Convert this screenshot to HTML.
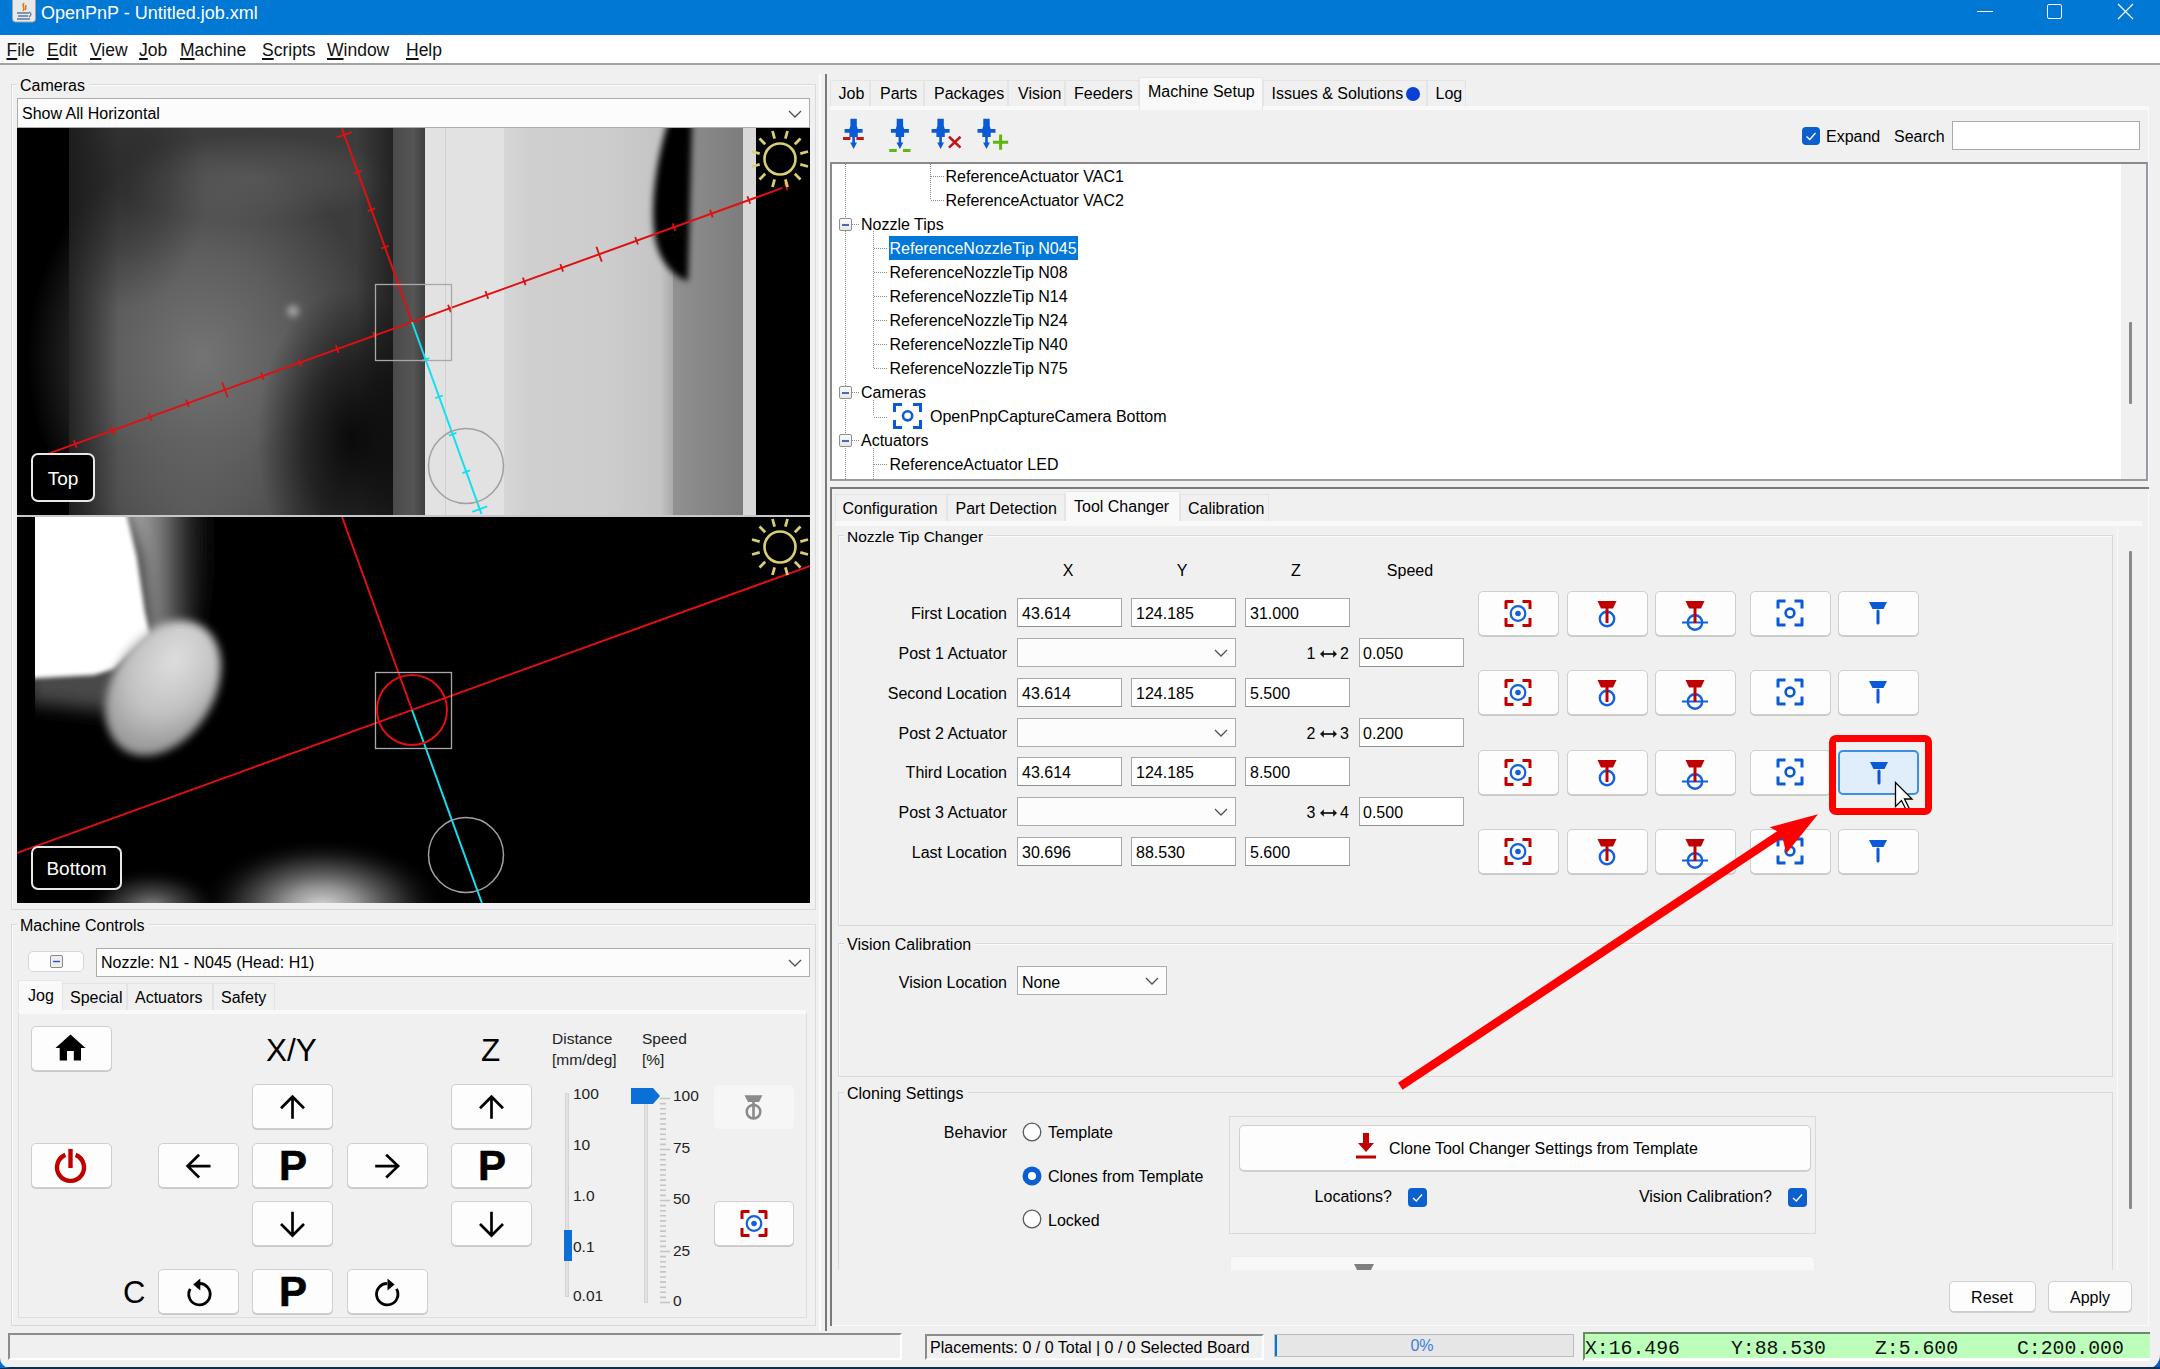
<!DOCTYPE html>
<html><head><meta charset="utf-8">
<style>
*{box-sizing:border-box}
html,body{margin:0;padding:0}
body{width:2160px;height:1369px;overflow:hidden;position:relative;background:#f0f0f0;font-family:"Liberation Sans",sans-serif;font-size:16px;color:#000}
.a{position:absolute}
.t{position:absolute;white-space:nowrap;line-height:24px;height:24px}
</style></head>
<body>
<div class="a" style="left:0px;top:0px;width:2160px;height:35px;background:#0078d4"></div>
<svg class="a" style="left:12px;top:0px;" width="24" height="23" viewBox="0 0 24 23"><rect x="0.5" y="-2" width="23" height="24" rx="3" fill="#e8e8e8" stroke="#9aa4ad"/><path d="M12 3 C9 6 14 8 11 11 M14 5 C13 7 15 8 13 10" stroke="#e07820" stroke-width="1.6" fill="none"/><path d="M5 13 H17 M6 16 H16 M5 19 H18" stroke="#5a7a9a" stroke-width="1.4"/><path d="M17 12 Q21 14 17 17" stroke="#5a7a9a" stroke-width="1.3" fill="none"/></svg>
<div class="t" style="top:1px;font-size:18px;color:#fff;left:41px;">OpenPnP - Untitled.job.xml</div>
<div class="a" style="left:1977px;top:11px;width:16px;height:1px;background:#fff"></div>
<div class="a" style="left:2047px;top:4px;width:15px;height:15px;border:1px solid #fff;border-radius:2px"></div>
<svg class="a" style="left:2117px;top:3px;" width="17" height="17" viewBox="0 0 17 17"><path d="M1 1 L16 16 M16 1 L1 16" stroke="#fff" stroke-width="1.2"/></svg>
<div class="a" style="left:0px;top:35px;width:2160px;height:28px;background:#fff"></div>
<div class="a" style="left:0px;top:36px;width:40px;height:26px;background:#f7f7f7"></div>
<div class="a" style="left:0px;top:63px;width:2160px;height:2px;background:#a3a3a3"></div>
<div class="t" style="top:38px;font-size:17.5px;color:#111;left:6.5px;"><span style="text-decoration:underline;text-underline-offset:2px;text-decoration-thickness:2px">F</span>ile</div>
<div class="t" style="top:38px;font-size:17.5px;color:#111;left:47px;"><span style="text-decoration:underline;text-underline-offset:2px;text-decoration-thickness:2px">E</span>dit</div>
<div class="t" style="top:38px;font-size:17.5px;color:#111;left:90px;"><span style="text-decoration:underline;text-underline-offset:2px;text-decoration-thickness:2px">V</span>iew</div>
<div class="t" style="top:38px;font-size:17.5px;color:#111;left:139px;"><span style="text-decoration:underline;text-underline-offset:2px;text-decoration-thickness:2px">J</span>ob</div>
<div class="t" style="top:38px;font-size:17.5px;color:#111;left:180px;"><span style="text-decoration:underline;text-underline-offset:2px;text-decoration-thickness:2px">M</span>achine</div>
<div class="t" style="top:38px;font-size:17.5px;color:#111;left:262px;"><span style="text-decoration:underline;text-underline-offset:2px;text-decoration-thickness:2px">S</span>cripts</div>
<div class="t" style="top:38px;font-size:17.5px;color:#111;left:327px;"><span style="text-decoration:underline;text-underline-offset:2px;text-decoration-thickness:2px">W</span>indow</div>
<div class="t" style="top:38px;font-size:17.5px;color:#111;left:406px;"><span style="text-decoration:underline;text-underline-offset:2px;text-decoration-thickness:2px">H</span>elp</div>
<div class="a" style="left:11px;top:84px;width:805px;height:826px;border:1px solid #d9d9d9;box-shadow:inset 1px 1px 0 #fbfbfb"></div>
<div class="t" style="left:17px;top:74px;font-size:16px;background:linear-gradient(transparent 7px,#f0f0f0 7px);padding:0 4px 0 3px">Cameras</div>
<div class="a" style="left:17px;top:98px;width:793px;height:30px;background:#fcfcfc;border:1px solid #adadad"></div>
<div class="t" style="top:102px;font-size:16px;left:22px;">Show All Horizontal</div>
<svg class="a" style="left:788px;top:110px;" width="14" height="8" viewBox="0 0 14 8"><polyline points="1,1 7.0,7 13,1" fill="none" stroke="#505050" stroke-width="1.3"/></svg>
<svg class="a" style="left:17px;top:128px;" width="793" height="387" viewBox="0 0 793 387"><defs>
<filter id="b3" x="-50%" y="-50%" width="200%" height="200%"><feGaussianBlur stdDeviation="3"/></filter>
<linearGradient id="g1" x1="52" x2="378" y1="0" y2="0" gradientUnits="userSpaceOnUse">
<stop offset="0" stop-color="#202020"/><stop offset="0.06" stop-color="#3a3a3a"/><stop offset="0.2" stop-color="#5c5c5c"/>
<stop offset="0.45" stop-color="#636363"/><stop offset="0.65" stop-color="#515151"/><stop offset="0.82" stop-color="#333333"/><stop offset="1" stop-color="#222222"/>
</linearGradient>
<linearGradient id="g2" x1="0" x2="1"><stop offset="0" stop-color="#d6d6d6"/><stop offset="0.15" stop-color="#cfcfcf"/><stop offset="0.6" stop-color="#cdcdcd"/><stop offset="0.92" stop-color="#c4c4c4"/><stop offset="1" stop-color="#a8a8a8"/></linearGradient>
<linearGradient id="g3" x1="0" x2="1"><stop offset="0" stop-color="#909090"/><stop offset="1" stop-color="#7c7c7c"/></linearGradient>
<linearGradient id="gl" x1="0" x2="1"><stop offset="0" stop-color="#000" stop-opacity="0.5"/><stop offset="1" stop-color="#000" stop-opacity="0"/></linearGradient>
<linearGradient id="gr" x1="0" x2="1"><stop offset="0" stop-color="#000" stop-opacity="0"/><stop offset="1" stop-color="#000" stop-opacity="0.45"/></linearGradient>
<linearGradient id="g5" x1="0" x2="1"><stop offset="0" stop-color="#4a4a4a"/><stop offset="0.6" stop-color="#555"/><stop offset="1" stop-color="#3a3a3a"/></linearGradient>
<radialGradient id="r1"><stop offset="0" stop-color="#6a6a6a" stop-opacity="0.5"/><stop offset="0.5" stop-color="#6a6a6a" stop-opacity="0.3"/><stop offset="1" stop-color="#6a6a6a" stop-opacity="0"/></radialGradient><radialGradient id="r2"><stop offset="0" stop-color="#7a7a7a" stop-opacity="0.9"/><stop offset="0.5" stop-color="#7a7a7a" stop-opacity="0.54"/><stop offset="1" stop-color="#7a7a7a" stop-opacity="0"/></radialGradient><radialGradient id="r3"><stop offset="0" stop-color="#000" stop-opacity="0.85"/><stop offset="0.5" stop-color="#000" stop-opacity="0.51"/><stop offset="1" stop-color="#000" stop-opacity="0"/></radialGradient><radialGradient id="r4"><stop offset="0" stop-color="#686868" stop-opacity="0.5"/><stop offset="0.5" stop-color="#686868" stop-opacity="0.3"/><stop offset="1" stop-color="#686868" stop-opacity="0"/></radialGradient><radialGradient id="r5"><stop offset="0" stop-color="#555555" stop-opacity="0.7"/><stop offset="0.5" stop-color="#555555" stop-opacity="0.42"/><stop offset="1" stop-color="#555555" stop-opacity="0"/></radialGradient>
</defs>
<rect width="793" height="387" fill="#000"/>
<rect x="52" y="0" width="326" height="387" fill="#3c3c3c"/>
<ellipse cx="185" cy="230" rx="175" ry="210" fill="url(#r2)"/>
<ellipse cx="235" cy="50" rx="140" ry="45" fill="url(#r1)"/>
<ellipse cx="175" cy="380" rx="130" ry="70" fill="url(#r4)"/>
<ellipse cx="335" cy="310" rx="95" ry="150" fill="url(#r3)"/>
<ellipse cx="110" cy="60" rx="80" ry="120" fill="url(#r3)" opacity="0.35"/>
<rect x="52" y="0" width="50" height="387" fill="url(#gl)"/>
<rect x="340" y="0" width="38" height="387" fill="url(#gr)"/>
<circle cx="276" cy="183" r="6" fill="#a0a0a0" filter="url(#b3)"/>
<rect x="376" y="0" width="34" height="387" fill="url(#g5)"/>
<rect x="408" y="0" width="79" height="387" fill="#e2e2e2"/>

<rect x="428" y="0" width="1" height="387" fill="#d0d0d0"/>
<rect x="487" y="0" width="170" height="387" fill="url(#g2)"/>
<rect x="656" y="0" width="71" height="387" fill="url(#g3)"/>
<g filter="url(#b3)"><path d="M651 -5 C638 35 632 85 639 115 C645 138 660 150 671 153 L675 -5 Z" fill="#000"/></g>
<rect x="726" y="0" width="13" height="387" fill="#d8d8d8"/>
<rect x="739" y="0" width="54" height="387" fill="#000"/>
<path d="M30.2 326.1 L765.5 59.9" stroke="#e01010" stroke-width="2" fill="none"/><path d="M324.8 0.0 L395.0 194.0" stroke="#e01010" stroke-width="2" fill="none"/><path d="M395.0 194.0 L464.5 386.0" stroke="#10e0f0" stroke-width="2" fill="none"/><path d="M431.1 176.7 L433.8 184.2 M468.5 163.1 L471.2 170.7 M505.9 149.6 L508.6 157.1 M543.3 136.0 L546.1 143.6 M579.4 118.7 L584.8 133.8 M618.2 109.0 L620.9 116.5 M655.6 95.4 L658.3 102.9 M693.0 81.9 L695.7 89.4 M730.4 68.3 L733.2 75.8 M767.9 54.8 L770.6 62.3 M358.9 211.3 L356.2 203.8 M321.5 224.9 L318.8 217.3 M284.1 238.4 L281.4 230.9 M246.7 252.0 L243.9 244.4 M210.6 269.3 L205.2 254.2 M171.8 279.0 L169.1 271.5 M134.4 292.6 L131.7 285.1 M97.0 306.1 L94.3 298.6 M59.6 319.7 L56.8 312.2 M377.7 157.9 L385.2 155.2 M364.1 120.5 L371.7 117.8 M350.6 83.1 L358.1 80.4 M337.0 45.7 L344.6 42.9 M319.7 9.6 L334.8 4.2 " stroke="#e01010" stroke-width="1.8" fill="none"/><path d="M412.3 230.1 L404.8 232.8 M425.9 267.5 L418.3 270.2 M439.4 304.9 L431.9 307.6 M453.0 342.3 L445.4 345.1 M470.3 378.4 L455.2 383.8 " stroke="#10e0f0" stroke-width="1.8" fill="none"/><rect x="358.5" y="156.5" width="76" height="76" fill="none" stroke="#a8a8a8" stroke-width="1.3"/><circle cx="449" cy="338" r="37.5" fill="none" stroke="#a0a0a0" stroke-width="1.5"/><circle cx="763" cy="31" r="15.5" fill="none" stroke="#d8d070" stroke-width="2.6"/><path d="M783.3 36.4 L791.0 38.5 M777.8 45.8 L783.5 51.5 M768.4 51.3 L770.5 59.0 M757.6 51.3 L755.5 59.0 M748.2 45.8 L742.5 51.5 M742.7 36.4 L735.0 38.5 M742.7 25.6 L735.0 23.5 M748.2 16.2 L742.5 10.5 M757.6 10.7 L755.5 3.0 M768.4 10.7 L770.5 3.0 M777.8 16.2 L783.5 10.5 M783.3 25.6 L791.0 23.5 " stroke="#d8d070" stroke-width="2.8" fill="none"/><rect x="15" y="326" width="62" height="47" rx="6" fill="#000" stroke="#e8e8e8" stroke-width="2"/><text x="46.0" y="356.5" fill="#fff" font-family="Liberation Sans" font-size="19" text-anchor="middle">Top</text></svg>
<div class="a" style="left:17px;top:515px;width:793px;height:2px;background:#c8c8c8"></div>
<svg class="a" style="left:17px;top:517px;" width="793" height="386" viewBox="0 0 793 386"><defs>
<filter id="c2" x="-50%" y="-50%" width="200%" height="200%"><feGaussianBlur stdDeviation="2"/></filter>
<filter id="c4" x="-50%" y="-50%" width="200%" height="200%"><feGaussianBlur stdDeviation="4"/></filter>
<filter id="c8" x="-50%" y="-50%" width="200%" height="200%"><feGaussianBlur stdDeviation="9"/></filter>
<radialGradient id="rg1" cx="0.45" cy="0.3" r="0.65"><stop offset="0" stop-color="#dedede"/><stop offset="0.6" stop-color="#c2c2c2"/><stop offset="1" stop-color="#9a9a9a"/></radialGradient>
<radialGradient id="rg2" cx="0.5" cy="0.5" r="0.5"><stop offset="0" stop-color="#d8d8d8"/><stop offset="0.3" stop-color="#909090"/><stop offset="0.65" stop-color="#3a3a3a" stop-opacity="0.8"/><stop offset="1" stop-color="#000" stop-opacity="0"/></radialGradient>
<radialGradient id="rg3" cx="0.5" cy="0.5" r="0.5"><stop offset="0" stop-color="#8a8a8a"/><stop offset="0.6" stop-color="#303030" stop-opacity="0.7"/><stop offset="1" stop-color="#000" stop-opacity="0"/></radialGradient>
<linearGradient id="lg1" x1="0" x2="1"><stop offset="0" stop-color="#c0c0c0"/><stop offset="0.45" stop-color="#707070"/><stop offset="1" stop-color="#000" stop-opacity="0"/></linearGradient>
</defs>
<rect width="793" height="386" fill="#000"/>
<g filter="url(#c8)"><path d="M100 -20 L205 -20 L195 50 L180 110 L130 130 L120 40 Z" fill="url(#lg1)"/></g>
<g filter="url(#c8)"><path d="M10 140 L110 130 L100 195 L10 185 Z" fill="#4a4a4a"/></g>
<g filter="url(#c2)"><path d="M-10 -10 L108 -10 L120 40 L128 95 L133 118 L97 152 L77 158 L40 160 L-10 163 Z" fill="#fff"/></g>
<rect x="18" y="0" width="80" height="140" fill="#fff"/>
<g filter="url(#c4)"><ellipse cx="146" cy="171" rx="51" ry="73" transform="rotate(32 146 171)" fill="url(#rg1)"/></g>
<ellipse cx="305" cy="390" rx="125" ry="70" fill="url(#rg2)"/>
<ellipse cx="135" cy="390" rx="70" ry="40" fill="url(#rg3)"/>
<rect x="0" y="0" width="18" height="386" fill="#000"/>
<path d="M-0.4 336.1 L793.7 48.7" stroke="#e01010" stroke-width="2" fill="none"/><path d="M325.1 0.0 L395.0 193.0" stroke="#e01010" stroke-width="2" fill="none"/><path d="M395.0 193.0 L464.9 386.0" stroke="#10e0f0" stroke-width="2" fill="none"/><rect x="358.5" y="155.5" width="76" height="76" fill="none" stroke="#a8a8a8" stroke-width="1.3"/><circle cx="395" cy="193" r="35" fill="none" stroke="#e01010" stroke-width="2"/><circle cx="449" cy="338" r="37.5" fill="none" stroke="#a0a0a0" stroke-width="1.5"/><circle cx="763" cy="30" r="15.5" fill="none" stroke="#d8d070" stroke-width="2.6"/><path d="M783.3 35.4 L791.0 37.5 M777.8 44.8 L783.5 50.5 M768.4 50.3 L770.5 58.0 M757.6 50.3 L755.5 58.0 M748.2 44.8 L742.5 50.5 M742.7 35.4 L735.0 37.5 M742.7 24.6 L735.0 22.5 M748.2 15.2 L742.5 9.5 M757.6 9.7 L755.5 2.0 M768.4 9.7 L770.5 2.0 M777.8 15.2 L783.5 9.5 M783.3 24.6 L791.0 22.5 " stroke="#d8d070" stroke-width="2.8" fill="none"/><rect x="15" y="330" width="89" height="42" rx="6" fill="#000" stroke="#e8e8e8" stroke-width="2"/><text x="59.5" y="358.0" fill="#fff" font-family="Liberation Sans" font-size="19" text-anchor="middle">Bottom</text></svg>
<div class="a" style="left:11px;top:924px;width:805px;height:402px;border:1px solid #d9d9d9;box-shadow:inset 1px 1px 0 #fbfbfb"></div>
<div class="t" style="left:17px;top:914px;font-size:16px;background:linear-gradient(transparent 7px,#f0f0f0 7px);padding:0 4px 0 3px">Machine Controls</div>
<div class="a" style="left:28px;top:951px;width:56px;height:21px;background:#fdfdfd;border:1px solid #d6d6d6;border-radius:5px;box-shadow:0 1px 0 #c8c8c8;box-shadow:none"><svg width="54" height="19" style="position:absolute;left:0;top:0"><rect x="21.5" y="3.5" width="12" height="12" rx="1.5" fill="#eee" stroke="#8a8a8a"/><path d="M24 9.5 H31" stroke="#3050b0" stroke-width="1.4"/></svg></div>
<div class="a" style="left:96px;top:948px;width:714px;height:29px;background:#fcfcfc;border:1px solid #adadad"></div>
<div class="t" style="top:951px;font-size:16px;left:101px;">Nozzle: N1 - N045 (Head: H1)</div>
<svg class="a" style="left:788px;top:959px;" width="14" height="8" viewBox="0 0 14 8"><polyline points="1,1 7.0,7 13,1" fill="none" stroke="#505050" stroke-width="1.3"/></svg>
<div class="a" style="left:18px;top:983px;width:44px;height:27px;background:#f0f0f0;border:1px solid #e3e3e3"></div>
<div class="a" style="left:18px;top:980px;width:45px;height:32px;background:#f9f9f9;border:1px solid #e6e6e6;border-bottom:none"></div>
<div class="a" style="left:62px;top:983px;width:65px;height:27px;background:#f0f0f0;border:1px solid #e3e3e3;border-bottom:none"></div>
<div class="t" style="top:986px;font-size:16px;left:70px;">Special</div>
<div class="a" style="left:127px;top:983px;width:86px;height:27px;background:#f0f0f0;border:1px solid #e3e3e3;border-bottom:none"></div>
<div class="t" style="top:986px;font-size:16px;left:135px;">Actuators</div>
<div class="a" style="left:213px;top:983px;width:62px;height:27px;background:#f0f0f0;border:1px solid #e3e3e3;border-bottom:none"></div>
<div class="t" style="top:986px;font-size:16px;left:221px;">Safety</div>
<div class="t" style="top:984px;font-size:16px;left:28px;">Jog</div>
<div class="a" style="left:18px;top:1010px;width:789px;height:308px;background:#f0f0f0;border:1px solid #dedede;border-top:4px solid #f9f9f9"></div>
<div class="a" style="left:31px;top:1026px;width:81px;height:45px;background:#fdfdfd;border:1px solid #cfcfcf;border-radius:5px;box-shadow:0 1px 0 #c8c8c8;"><svg width="81" height="45" style="position:absolute;left:-1px;top:-1px"><path d="M39.5 8.5 L24.5 22 H28.7 V34.5 H36 V25 H42.8 V34.5 H50 V22 H54.5 Z" fill="#000"/></svg></div>
<div class="a" style="left:31px;top:1143px;width:81px;height:45px;background:#fdfdfd;border:1px solid #cfcfcf;border-radius:5px;box-shadow:0 1px 0 #c8c8c8;"><svg width="81" height="45" style="position:absolute;left:-1px;top:-1px"><path d="M34.4 11.9 A13.5 13.5 0 1 0 44.6 11.9" stroke="#c00000" stroke-width="4.4" fill="none"/><path d="M39.5 5.9 V25" stroke="#c00000" stroke-width="4.4"/></svg></div>
<div class="a" style="left:252px;top:1084px;width:81px;height:45px;background:#fdfdfd;border:1px solid #cfcfcf;border-radius:5px;box-shadow:0 1px 0 #c8c8c8;"><svg width="81" height="45" style="position:absolute;left:-1px;top:-1px"><path d="M40.5 34.7 V12.5 M29 24.2 L40.5 12.7 L52 24.2" stroke="#000" stroke-width="2.7" fill="none" stroke-linecap="butt" stroke-linejoin="miter"/></svg></div>
<div class="a" style="left:158px;top:1143px;width:81px;height:45px;background:#fdfdfd;border:1px solid #cfcfcf;border-radius:5px;box-shadow:0 1px 0 #c8c8c8;"><svg width="81" height="45" style="position:absolute;left:-1px;top:-1px"><path d="M52.5 23.1 H29.6 M41.1 11.7 L29.6 23.1 L41.1 34.5" stroke="#000" stroke-width="2.7" fill="none" stroke-linecap="butt" stroke-linejoin="miter"/></svg></div>
<div class="a" style="left:252px;top:1143px;width:81px;height:45px;background:#fdfdfd;border:1px solid #cfcfcf;border-radius:5px;box-shadow:0 1px 0 #c8c8c8;"><div style="position:absolute;left:0;top:-1px;width:80px;text-align:center;font-weight:bold;font-size:42px;line-height:45px;-webkit-text-stroke:0.6px #000">P</div></div>
<div class="a" style="left:347px;top:1143px;width:81px;height:45px;background:#fdfdfd;border:1px solid #cfcfcf;border-radius:5px;box-shadow:0 1px 0 #c8c8c8;"><svg width="81" height="45" style="position:absolute;left:-1px;top:-1px"><path d="M28.2 23.1 H51.1 M39.2 11.7 L51.1 23.1 L39.2 34.5" stroke="#000" stroke-width="2.7" fill="none" stroke-linecap="butt" stroke-linejoin="miter"/></svg></div>
<div class="a" style="left:252px;top:1201px;width:81px;height:45px;background:#fdfdfd;border:1px solid #cfcfcf;border-radius:5px;box-shadow:0 1px 0 #c8c8c8;"><svg width="81" height="45" style="position:absolute;left:-1px;top:-1px"><path d="M40.5 10.7 V34.5 M29 23 L40.5 34.5 L52 23" stroke="#000" stroke-width="2.7" fill="none" stroke-linecap="butt" stroke-linejoin="miter"/></svg></div>
<div class="a" style="left:158px;top:1269px;width:81px;height:45px;background:#fdfdfd;border:1px solid #cfcfcf;border-radius:5px;box-shadow:0 1px 0 #c8c8c8;"><svg width="81" height="45" style="position:absolute;left:-1px;top:-1px"><path d="M41.5 14.5 A10.7 10.7 0 1 1 32.2 19.85" stroke="#000" stroke-width="2.8" fill="none"/><path d="M35.2 15.5 L42.3 9.4 V21.6 Z" fill="#000"/></svg></div>
<div class="a" style="left:252px;top:1269px;width:81px;height:45px;background:#fdfdfd;border:1px solid #cfcfcf;border-radius:5px;box-shadow:0 1px 0 #c8c8c8;"><div style="position:absolute;left:0;top:-1px;width:80px;text-align:center;font-weight:bold;font-size:42px;line-height:45px;-webkit-text-stroke:0.6px #000">P</div></div>
<div class="a" style="left:347px;top:1269px;width:81px;height:45px;background:#fdfdfd;border:1px solid #cfcfcf;border-radius:5px;box-shadow:0 1px 0 #c8c8c8;"><svg width="81" height="45" style="position:absolute;left:-1px;top:-1px"><path d="M40.2 14.5 A10.7 10.7 0 1 0 49.5 19.85" stroke="#000" stroke-width="2.8" fill="none"/><path d="M47.6 15.5 L40.5 9.4 V21.6 Z" fill="#000"/></svg></div>
<div class="a" style="left:451px;top:1084px;width:81px;height:45px;background:#fdfdfd;border:1px solid #cfcfcf;border-radius:5px;box-shadow:0 1px 0 #c8c8c8;"><svg width="81" height="45" style="position:absolute;left:-1px;top:-1px"><path d="M40.5 34.7 V12.5 M29 24.2 L40.5 12.7 L52 24.2" stroke="#000" stroke-width="2.7" fill="none" stroke-linecap="butt" stroke-linejoin="miter"/></svg></div>
<div class="a" style="left:451px;top:1143px;width:81px;height:45px;background:#fdfdfd;border:1px solid #cfcfcf;border-radius:5px;box-shadow:0 1px 0 #c8c8c8;"><div style="position:absolute;left:0;top:-1px;width:80px;text-align:center;font-weight:bold;font-size:42px;line-height:45px;-webkit-text-stroke:0.6px #000">P</div></div>
<div class="a" style="left:451px;top:1201px;width:81px;height:45px;background:#fdfdfd;border:1px solid #cfcfcf;border-radius:5px;box-shadow:0 1px 0 #c8c8c8;"><svg width="81" height="45" style="position:absolute;left:-1px;top:-1px"><path d="M40.5 10.7 V34.5 M29 23 L40.5 34.5 L52 23" stroke="#000" stroke-width="2.7" fill="none" stroke-linecap="butt" stroke-linejoin="miter"/></svg></div>
<div class="t" style="top:1038px;font-size:31.5px;left:266px;">X/Y</div>
<div class="t" style="top:1038px;font-size:31.5px;left:481px;">Z</div>
<div class="t" style="top:1281px;font-size:31px;left:123px;">C</div>
<div class="t" style="top:1027px;font-size:15.5px;color:#222;left:552px;">Distance</div>
<div class="t" style="top:1048px;font-size:15.5px;color:#222;left:552px;">[mm/deg]</div>
<div class="t" style="top:1027px;font-size:15.5px;color:#222;left:642px;">Speed</div>
<div class="t" style="top:1048px;font-size:15.5px;color:#222;left:642px;">[%]</div>
<div class="a" style="left:565px;top:1093px;width:4px;height:204px;background:#e2e2e2;border:1px solid #d4d4d4"></div>
<div class="a" style="left:564px;top:1230px;width:8px;height:31px;background:#0a6fd6"></div>
<div class="t" style="top:1082px;font-size:15.5px;color:#222;left:573px;">100</div>
<div class="t" style="top:1133px;font-size:15.5px;color:#222;left:573px;">10</div>
<div class="t" style="top:1184px;font-size:15.5px;color:#222;left:573px;">1.0</div>
<div class="t" style="top:1235px;font-size:15.5px;color:#222;left:573px;">0.1</div>
<div class="t" style="top:1284px;font-size:15.5px;color:#222;left:573px;">0.01</div>
<div class="a" style="left:644px;top:1097px;width:4px;height:206px;background:#e2e2e2;border:1px solid #d4d4d4"></div>
<svg class="a" style="left:631px;top:1088px;" width="30" height="17" viewBox="0 0 30 17"><path d="M0 0 H22 L29 8 L22 16 H0 Z" fill="#0a6fd6"/></svg>
<svg class="a" style="left:0px;top:0px;" width="0" height="0" viewBox="0 0 0 0"></svg>
<svg class="a" style="left:660px;top:1097px;" width="12" height="208" viewBox="0 0 12 208"><path d="M0 1.5 H6 M0 6.6 H6 M0 11.7 H6 M0 16.8 H6 M0 21.9 H6 M0 27.0 H6 M0 32.1 H6 M0 37.2 H6 M0 42.3 H6 M0 47.4 H6 M0 52.5 H6 M0 57.6 H6 M0 62.7 H6 M0 67.8 H6 M0 72.9 H6 M0 78.0 H6 M0 83.1 H6 M0 88.2 H6 M0 93.3 H6 M0 98.4 H6 M0 103.5 H6 M0 108.6 H6 M0 113.7 H6 M0 118.8 H6 M0 123.9 H6 M0 129.0 H6 M0 134.1 H6 M0 139.2 H6 M0 144.3 H6 M0 149.4 H6 M0 154.5 H6 M0 159.6 H6 M0 164.7 H6 M0 169.8 H6 M0 174.9 H6 M0 180.0 H6 M0 185.1 H6 M0 190.2 H6 M0 195.3 H6 M0 200.4 H6 M0 205.5 H6 M0 1.5 H10 M0 52.5 H10 M0 103.5 H10 M0 154.5 H10 M0 205.5 H10 " stroke="#c4c4c4" stroke-width="1.6" fill="none"/></svg>
<div class="t" style="top:1084px;font-size:15.5px;color:#222;left:673px;">100</div>
<div class="t" style="top:1136px;font-size:15.5px;color:#222;left:673px;">75</div>
<div class="t" style="top:1187px;font-size:15.5px;color:#222;left:673px;">50</div>
<div class="t" style="top:1239px;font-size:15.5px;color:#222;left:673px;">25</div>
<div class="t" style="top:1289px;font-size:15.5px;color:#222;left:673px;">0</div>
<div class="a" style="left:714px;top:1085px;width:80px;height:44px;background:#f6f6f6;border-radius:5px"></div>
<svg class="a" style="left:714px;top:1085px;" width="80" height="44" viewBox="0 0 80 44"><path d="M30.5 10.3 H48.5 L45 17 H34 Z" fill="#8a8a8a"/><path d="M39.5 17 V33" stroke="#8a8a8a" stroke-width="2.6"/><circle cx="39.5" cy="26.7" r="6.8" fill="none" stroke="#8a8a8a" stroke-width="2.5"/></svg>
<div class="a" style="left:714px;top:1201px;width:80px;height:45px;background:#fdfdfd;border:1px solid #cfcfcf;border-radius:5px;box-shadow:0 1px 0 #c8c8c8;"><svg width="80" height="45" style="position:absolute;left:-1px;top:-1px"><path d="M28.0 18.0 V10.5 H35.5 M44.5 10.5 H52.0 V18.0 M52.0 27.0 V34.5 H44.5 M35.5 34.5 H28.0 V27.0" stroke="#c00000" stroke-width="3" fill="none" stroke-linejoin="round" stroke-linecap="butt"/><circle cx="40" cy="22.5" r="7.3" fill="none" stroke="#1060e0" stroke-width="2.2"/><circle cx="40" cy="22.5" r="2.8" fill="#1060e0"/></svg></div>
<div class="a" style="left:819px;top:74px;width:2px;height:1257px;background:#fafafa"></div>
<div class="a" style="left:825px;top:74px;width:2px;height:1257px;background:#7a7a7a"></div>
<div class="a" style="left:830px;top:106px;width:1319px;height:1220px;background:#f0f0f0;border-top:4px solid #f9f9f9;border-right:1px solid #fafafa;border-bottom:1px solid #fafafa"></div>
<div class="a" style="left:830px;top:80px;width:40px;height:26px;background:#f0f0f0;border:1px solid #e4e4e4;border-bottom:none"></div>
<div class="t" style="top:82px;font-size:16px;left:838.5px;">Job</div>
<div class="a" style="left:870px;top:80px;width:54px;height:26px;background:#f0f0f0;border:1px solid #e4e4e4;border-bottom:none"></div>
<div class="t" style="top:82px;font-size:16px;left:880px;">Parts</div>
<div class="a" style="left:924px;top:80px;width:84px;height:26px;background:#f0f0f0;border:1px solid #e4e4e4;border-bottom:none"></div>
<div class="t" style="top:82px;font-size:16px;left:934px;">Packages</div>
<div class="a" style="left:1008px;top:80px;width:57px;height:26px;background:#f0f0f0;border:1px solid #e4e4e4;border-bottom:none"></div>
<div class="t" style="top:82px;font-size:16px;left:1018px;">Vision</div>
<div class="a" style="left:1065px;top:80px;width:74px;height:26px;background:#f0f0f0;border:1px solid #e4e4e4;border-bottom:none"></div>
<div class="t" style="top:82px;font-size:16px;left:1074px;">Feeders</div>
<div class="a" style="left:1263px;top:80px;width:164px;height:26px;background:#f0f0f0;border:1px solid #e4e4e4;border-bottom:none"></div>
<div class="t" style="top:82px;font-size:16px;left:1271.5px;">Issues &amp; Solutions</div>
<div class="a" style="left:1427px;top:80px;width:39px;height:26px;background:#f0f0f0;border:1px solid #e4e4e4;border-bottom:none"></div>
<div class="t" style="top:82px;font-size:16px;left:1435.5px;">Log</div>
<div class="a" style="left:1139px;top:77px;width:124px;height:33px;background:#f9f9f9;border:1px solid #e6e6e6;border-bottom:none"></div>
<div class="t" style="top:80px;font-size:16px;left:1148px;">Machine Setup</div>
<div class="a" style="left:1406px;top:87px;width:14px;height:14px;border-radius:50%;background:#0a3fd8"></div>
<svg class="a" style="left:830px;top:118px;" width="190" height="36" viewBox="0 0 190 36"><path d="M20.4 0.8 L26.8 0.8 L26.8 7.8 L27.8 11.0 L32.6 11.0 L32.6 14.7 L27.8 14.7 L27.8 18.9 L24.9 18.9 L24.9 24.4 L27.0 24.4 L23.6 30.9 L20.2 24.4 L22.3 24.4 L22.3 18.9 L19.4 18.9 L19.4 14.7 L14.6 14.7 L14.6 11.0 L19.4 11.0 L20.4 7.8 Z" fill="#0a5ad8"/><path d="M13 20.4 H20.4 M26.4 20.4 H33.8" stroke="#c01818" stroke-width="3"/><path d="M66.7 0.8 L73.1 0.8 L73.1 7.8 L74.1 11.0 L78.9 11.0 L78.9 14.7 L74.1 14.7 L74.1 18.9 L71.2 18.9 L71.2 24.4 L73.3 24.4 L69.9 30.9 L66.5 24.4 L68.6 24.4 L68.6 18.9 L65.7 18.9 L65.7 14.7 L60.9 14.7 L60.9 11.0 L65.7 11.0 L66.7 7.8 Z" fill="#0a5ad8"/><path d="M59.3 32.5 H66.7 M73 32.5 H80.5" stroke="#5cb810" stroke-width="3.2"/><path d="M107.4 0.8 L113.8 0.8 L113.8 7.8 L114.8 11.0 L119.6 11.0 L119.6 14.7 L114.8 14.7 L114.8 18.9 L111.9 18.9 L111.9 24.4 L114.0 24.4 L110.6 30.9 L107.2 24.4 L109.3 24.4 L109.3 18.9 L106.4 18.9 L106.4 14.7 L101.6 14.7 L101.6 11.0 L106.4 11.0 L107.4 7.8 Z" fill="#0a5ad8"/><path d="M119 18.8 L130.5 29.6 M130.5 18.8 L119 29.6" stroke="#c01818" stroke-width="2.6"/><path d="M153.3 0.8 L159.7 0.8 L159.7 7.8 L160.7 11.0 L165.5 11.0 L165.5 14.7 L160.7 14.7 L160.7 18.9 L157.8 18.9 L157.8 24.4 L159.9 24.4 L156.5 30.9 L153.1 24.4 L155.2 24.4 L155.2 18.9 L152.3 18.9 L152.3 14.7 L147.5 14.7 L147.5 11.0 L152.3 11.0 L153.3 7.8 Z" fill="#0a5ad8"/><path d="M163 24.2 H178.2 M170.6 16.6 V31.8" stroke="#5cb810" stroke-width="3"/></svg>
<div class="a" style="left:1802px;top:127px;width:18px;height:18px;border-radius:4px;background:#0b5fce"></div>
<svg class="a" style="left:1802px;top:127px;" width="18" height="18" viewBox="0 0 18 18"><path d="M4.5 9.5 L7.8 12.5 L13.5 6" stroke="#fff" stroke-width="1.4" fill="none"/></svg>
<div class="t" style="top:125px;font-size:16px;left:1826px;">Expand</div>
<div class="t" style="top:125px;font-size:16px;left:1894px;">Search</div>
<div class="a" style="left:1952px;top:121px;width:188px;height:29px;background:#fff;border:1px solid #a9a9a9"></div>
<div class="a" style="left:830px;top:162px;width:1318px;height:319px;background:#fff;border:2px solid #8a8a8a;border-right-color:#9a9aa6;border-bottom-color:#9a9aa6"></div>
<div class="a" style="left:2121px;top:164px;width:25px;height:315px;background:#f0f0f0"></div>
<div class="a" style="left:2129px;top:322px;width:3px;height:82px;background:#8a8a8a;border-radius:1px"></div>
<div class="a" style="left:845px;top:164px;width:1px;height:54px;background:repeating-linear-gradient(to bottom,#8a8a8a 0 1px,transparent 1px 2px)"></div>
<div class="a" style="left:845px;top:231px;width:1px;height:155px;background:repeating-linear-gradient(to bottom,#8a8a8a 0 1px,transparent 1px 2px)"></div>
<div class="a" style="left:845px;top:400px;width:1px;height:34px;background:repeating-linear-gradient(to bottom,#8a8a8a 0 1px,transparent 1px 2px)"></div>
<div class="a" style="left:845px;top:448px;width:1px;height:31px;background:repeating-linear-gradient(to bottom,#8a8a8a 0 1px,transparent 1px 2px)"></div>
<div class="a" style="left:930px;top:164px;width:1px;height:36px;background:repeating-linear-gradient(to bottom,#8a8a8a 0 1px,transparent 1px 2px)"></div>
<div class="a" style="left:931px;top:176px;width:13px;height:1px;background:repeating-linear-gradient(to right,#8a8a8a 0 1px,transparent 1px 2px)"></div>
<div class="a" style="left:931px;top:200px;width:13px;height:1px;background:repeating-linear-gradient(to right,#8a8a8a 0 1px,transparent 1px 2px)"></div>
<div class="t" style="top:165px;font-size:16px;left:945.5px;">ReferenceActuator VAC1</div>
<div class="t" style="top:189px;font-size:16px;left:945.5px;">ReferenceActuator VAC2</div>
<div class="a" style="left:839px;top:218px;width:13px;height:13px;border:1px solid #909090;border-radius:2px;background:linear-gradient(#fafafa,#e6e6e6)"></div>
<div class="a" style="left:842px;top:224px;width:7px;height:1.5px;background:#4a6ab8"></div>
<div class="a" style="left:852px;top:224px;width:8px;height:1px;background:repeating-linear-gradient(to right,#8a8a8a 0 1px,transparent 1px 2px)"></div>
<div class="t" style="top:213px;font-size:16px;left:861px;">Nozzle Tips</div>
<div class="a" style="left:839px;top:386px;width:13px;height:13px;border:1px solid #909090;border-radius:2px;background:linear-gradient(#fafafa,#e6e6e6)"></div>
<div class="a" style="left:842px;top:392px;width:7px;height:1.5px;background:#4a6ab8"></div>
<div class="a" style="left:852px;top:392px;width:8px;height:1px;background:repeating-linear-gradient(to right,#8a8a8a 0 1px,transparent 1px 2px)"></div>
<div class="t" style="top:381px;font-size:16px;left:861px;">Cameras</div>
<div class="a" style="left:839px;top:434px;width:13px;height:13px;border:1px solid #909090;border-radius:2px;background:linear-gradient(#fafafa,#e6e6e6)"></div>
<div class="a" style="left:842px;top:440px;width:7px;height:1.5px;background:#4a6ab8"></div>
<div class="a" style="left:852px;top:440px;width:8px;height:1px;background:repeating-linear-gradient(to right,#8a8a8a 0 1px,transparent 1px 2px)"></div>
<div class="t" style="top:429px;font-size:16px;left:861px;">Actuators</div>
<div class="a" style="left:873px;top:231px;width:1px;height:137px;background:repeating-linear-gradient(to bottom,#8a8a8a 0 1px,transparent 1px 2px)"></div>
<div class="a" style="left:874px;top:248px;width:14px;height:1px;background:repeating-linear-gradient(to right,#8a8a8a 0 1px,transparent 1px 2px)"></div>
<div class="a" style="left:889px;top:236px;width:189px;height:24px;background:#0078d7"></div>
<div class="t" style="top:237px;font-size:16px;color:#fff;left:889.5px;">ReferenceNozzleTip N045</div>
<div class="a" style="left:874px;top:272px;width:14px;height:1px;background:repeating-linear-gradient(to right,#8a8a8a 0 1px,transparent 1px 2px)"></div>
<div class="t" style="top:261px;font-size:16px;left:889.5px;">ReferenceNozzleTip N08</div>
<div class="a" style="left:874px;top:296px;width:14px;height:1px;background:repeating-linear-gradient(to right,#8a8a8a 0 1px,transparent 1px 2px)"></div>
<div class="t" style="top:285px;font-size:16px;left:889.5px;">ReferenceNozzleTip N14</div>
<div class="a" style="left:874px;top:320px;width:14px;height:1px;background:repeating-linear-gradient(to right,#8a8a8a 0 1px,transparent 1px 2px)"></div>
<div class="t" style="top:309px;font-size:16px;left:889.5px;">ReferenceNozzleTip N24</div>
<div class="a" style="left:874px;top:344px;width:14px;height:1px;background:repeating-linear-gradient(to right,#8a8a8a 0 1px,transparent 1px 2px)"></div>
<div class="t" style="top:333px;font-size:16px;left:889.5px;">ReferenceNozzleTip N40</div>
<div class="a" style="left:874px;top:368px;width:14px;height:1px;background:repeating-linear-gradient(to right,#8a8a8a 0 1px,transparent 1px 2px)"></div>
<div class="t" style="top:357px;font-size:16px;left:889.5px;">ReferenceNozzleTip N75</div>
<div class="a" style="left:873px;top:400px;width:1px;height:16px;background:repeating-linear-gradient(to bottom,#8a8a8a 0 1px,transparent 1px 2px)"></div>
<div class="a" style="left:874px;top:417px;width:14px;height:1px;background:repeating-linear-gradient(to right,#8a8a8a 0 1px,transparent 1px 2px)"></div>
<svg class="a" style="left:893px;top:403px;" width="30" height="27" viewBox="0 0 30 27"><path d="M1.5 9 V1.5 H9 M20 1.5 H27.5 V9 M27.5 17 V24.5 H20 M9 24.5 H1.5 V17" stroke="#0a5ad8" stroke-width="3" fill="none"/><circle cx="14.6" cy="12.8" r="4.6" fill="none" stroke="#0a5ad8" stroke-width="2.6"/></svg>
<div class="t" style="top:405px;font-size:16px;left:930px;">OpenPnpCaptureCamera Bottom</div>
<div class="a" style="left:873px;top:448px;width:1px;height:31px;background:repeating-linear-gradient(to bottom,#8a8a8a 0 1px,transparent 1px 2px)"></div>
<div class="a" style="left:874px;top:464px;width:14px;height:1px;background:repeating-linear-gradient(to right,#8a8a8a 0 1px,transparent 1px 2px)"></div>
<div class="t" style="top:453px;font-size:16px;left:889.5px;">ReferenceActuator LED</div>
<div class="a" style="left:830px;top:487px;width:1319px;height:839px;border-top:2px solid #7a7a7a"></div>
<div class="a" style="left:830px;top:489px;width:2px;height:837px;background:#7a7a7a"></div>
<div class="a" style="left:835px;top:494px;width:112px;height:27px;background:#f0f0f0;border:1px solid #e4e4e4;border-bottom:none"></div>
<div class="t" style="top:497px;font-size:16px;left:842.5px;">Configuration</div>
<div class="a" style="left:947px;top:494px;width:118px;height:27px;background:#f0f0f0;border:1px solid #e4e4e4;border-bottom:none"></div>
<div class="t" style="top:497px;font-size:16px;left:955.5px;">Part Detection</div>
<div class="a" style="left:1180px;top:494px;width:89px;height:27px;background:#f0f0f0;border:1px solid #e4e4e4;border-bottom:none"></div>
<div class="t" style="top:497px;font-size:16px;left:1188px;">Calibration</div>
<div class="a" style="left:1065px;top:491px;width:115px;height:33px;background:#f9f9f9;border:1px solid #e6e6e6;border-bottom:none"></div>
<div class="t" style="top:495px;font-size:16px;left:1074px;">Tool Changer</div>
<div class="a" style="left:835px;top:521px;width:1307px;height:5px;background:#f9f9f9"></div>
<div class="a" style="left:2117px;top:526px;width:1px;height:744px;background:#fafafa"></div>
<div class="a" style="left:2129px;top:551px;width:3px;height:658px;background:#8a8a8a;border-radius:1px"></div>
<div class="a" style="left:838px;top:535px;width:1275px;height:391px;border:1px solid #d9d9d9;box-shadow:inset 1px 1px 0 #fbfbfb"></div>
<div class="t" style="left:844px;top:525px;font-size:15.5px;background:linear-gradient(transparent 7px,#f0f0f0 7px);padding:0 4px 0 3px">Nozzle Tip Changer</div>
<div class="t" style="top:559px;font-size:16px;left:768px;width:600px;text-align:center;">X</div>
<div class="t" style="top:559px;font-size:16px;left:882px;width:600px;text-align:center;">Y</div>
<div class="t" style="top:559px;font-size:16px;left:996px;width:600px;text-align:center;">Z</div>
<div class="t" style="top:559px;font-size:16px;left:1110px;width:600px;text-align:center;">Speed</div>
<div class="t" style="top:602px;font-size:16px;right:1153px;">First Location</div>
<div class="a" style="left:1017px;top:598px;width:105px;height:29px;background:#fff;border:1px solid #a9a9a9;border-bottom-color:#8f8f8f"></div>
<div class="t" style="top:602px;font-size:16px;left:1022px;">43.614</div>
<div class="a" style="left:1131px;top:598px;width:105px;height:29px;background:#fff;border:1px solid #a9a9a9;border-bottom-color:#8f8f8f"></div>
<div class="t" style="top:602px;font-size:16px;left:1136px;">124.185</div>
<div class="a" style="left:1245px;top:598px;width:105px;height:29px;background:#fff;border:1px solid #a9a9a9;border-bottom-color:#8f8f8f"></div>
<div class="t" style="top:602px;font-size:16px;left:1250px;">31.000</div>
<div class="t" style="top:642px;font-size:16px;right:1153px;">Post 1 Actuator</div>
<div class="a" style="left:1017px;top:638px;width:219px;height:29px;background:#fcfcfc;border:1px solid #adadad"></div>
<svg class="a" style="left:1214px;top:649px;" width="14" height="8" viewBox="0 0 14 8"><polyline points="1,1 7.0,7 13,1" fill="none" stroke="#505050" stroke-width="1.3"/></svg>
<div class="t" style="top:642px;font-size:16px;left:1306.5px;">1</div>
<div class="t" style="top:642px;font-size:16px;left:1340px;">2</div>
<svg class="a" style="left:1319px;top:649px;" width="19" height="10" viewBox="0 0 19 10"><path d="M2.5 5 H16.5" stroke="#111" stroke-width="1.7"/><path d="M1 5 L4.8 1.3 V8.7 Z M18 5 L14.2 1.3 V8.7 Z" fill="#111"/></svg>
<div class="a" style="left:1359px;top:638px;width:105px;height:29px;background:#fff;border:1px solid #a9a9a9;border-bottom-color:#8f8f8f"></div>
<div class="t" style="top:642px;font-size:16px;left:1363px;">0.050</div>
<div class="t" style="top:682px;font-size:16px;right:1153px;">Second Location</div>
<div class="a" style="left:1017px;top:678px;width:105px;height:29px;background:#fff;border:1px solid #a9a9a9;border-bottom-color:#8f8f8f"></div>
<div class="t" style="top:682px;font-size:16px;left:1022px;">43.614</div>
<div class="a" style="left:1131px;top:678px;width:105px;height:29px;background:#fff;border:1px solid #a9a9a9;border-bottom-color:#8f8f8f"></div>
<div class="t" style="top:682px;font-size:16px;left:1136px;">124.185</div>
<div class="a" style="left:1245px;top:678px;width:105px;height:29px;background:#fff;border:1px solid #a9a9a9;border-bottom-color:#8f8f8f"></div>
<div class="t" style="top:682px;font-size:16px;left:1250px;">5.500</div>
<div class="t" style="top:722px;font-size:16px;right:1153px;">Post 2 Actuator</div>
<div class="a" style="left:1017px;top:718px;width:219px;height:29px;background:#fcfcfc;border:1px solid #adadad"></div>
<svg class="a" style="left:1214px;top:729px;" width="14" height="8" viewBox="0 0 14 8"><polyline points="1,1 7.0,7 13,1" fill="none" stroke="#505050" stroke-width="1.3"/></svg>
<div class="t" style="top:722px;font-size:16px;left:1306.5px;">2</div>
<div class="t" style="top:722px;font-size:16px;left:1340px;">3</div>
<svg class="a" style="left:1319px;top:729px;" width="19" height="10" viewBox="0 0 19 10"><path d="M2.5 5 H16.5" stroke="#111" stroke-width="1.7"/><path d="M1 5 L4.8 1.3 V8.7 Z M18 5 L14.2 1.3 V8.7 Z" fill="#111"/></svg>
<div class="a" style="left:1359px;top:718px;width:105px;height:29px;background:#fff;border:1px solid #a9a9a9;border-bottom-color:#8f8f8f"></div>
<div class="t" style="top:722px;font-size:16px;left:1363px;">0.200</div>
<div class="t" style="top:761px;font-size:16px;right:1153px;">Third Location</div>
<div class="a" style="left:1017px;top:757px;width:105px;height:29px;background:#fff;border:1px solid #a9a9a9;border-bottom-color:#8f8f8f"></div>
<div class="t" style="top:761px;font-size:16px;left:1022px;">43.614</div>
<div class="a" style="left:1131px;top:757px;width:105px;height:29px;background:#fff;border:1px solid #a9a9a9;border-bottom-color:#8f8f8f"></div>
<div class="t" style="top:761px;font-size:16px;left:1136px;">124.185</div>
<div class="a" style="left:1245px;top:757px;width:105px;height:29px;background:#fff;border:1px solid #a9a9a9;border-bottom-color:#8f8f8f"></div>
<div class="t" style="top:761px;font-size:16px;left:1250px;">8.500</div>
<div class="t" style="top:801px;font-size:16px;right:1153px;">Post 3 Actuator</div>
<div class="a" style="left:1017px;top:797px;width:219px;height:29px;background:#fcfcfc;border:1px solid #adadad"></div>
<svg class="a" style="left:1214px;top:808px;" width="14" height="8" viewBox="0 0 14 8"><polyline points="1,1 7.0,7 13,1" fill="none" stroke="#505050" stroke-width="1.3"/></svg>
<div class="t" style="top:801px;font-size:16px;left:1306.5px;">3</div>
<div class="t" style="top:801px;font-size:16px;left:1340px;">4</div>
<svg class="a" style="left:1319px;top:808px;" width="19" height="10" viewBox="0 0 19 10"><path d="M2.5 5 H16.5" stroke="#111" stroke-width="1.7"/><path d="M1 5 L4.8 1.3 V8.7 Z M18 5 L14.2 1.3 V8.7 Z" fill="#111"/></svg>
<div class="a" style="left:1359px;top:797px;width:105px;height:29px;background:#fff;border:1px solid #a9a9a9;border-bottom-color:#8f8f8f"></div>
<div class="t" style="top:801px;font-size:16px;left:1363px;">0.500</div>
<div class="t" style="top:841px;font-size:16px;right:1153px;">Last Location</div>
<div class="a" style="left:1017px;top:837px;width:105px;height:29px;background:#fff;border:1px solid #a9a9a9;border-bottom-color:#8f8f8f"></div>
<div class="t" style="top:841px;font-size:16px;left:1022px;">30.696</div>
<div class="a" style="left:1131px;top:837px;width:105px;height:29px;background:#fff;border:1px solid #a9a9a9;border-bottom-color:#8f8f8f"></div>
<div class="t" style="top:841px;font-size:16px;left:1136px;">88.530</div>
<div class="a" style="left:1245px;top:837px;width:105px;height:29px;background:#fff;border:1px solid #a9a9a9;border-bottom-color:#8f8f8f"></div>
<div class="t" style="top:841px;font-size:16px;left:1250px;">5.600</div>
<div class="a" style="left:1478px;top:591px;width:81px;height:45px;background:#fdfdfd;border:1px solid #cfcfcf;border-radius:5px;box-shadow:0 1px 0 #c8c8c8;"><svg width="81" height="45" style="position:absolute;left:-1px;top:-1px"><path d="M28.0 18.0 V10.5 H35.5 M44.5 10.5 H52.0 V18.0 M52.0 27.0 V34.5 H44.5 M35.5 34.5 H28.0 V27.0" stroke="#c00000" stroke-width="3" fill="none" stroke-linejoin="round" stroke-linecap="butt"/><circle cx="40" cy="22.5" r="7.3" fill="none" stroke="#1060e0" stroke-width="2.2"/><circle cx="40" cy="22.5" r="2.8" fill="#1060e0"/></svg></div>
<div class="a" style="left:1567px;top:591px;width:81px;height:45px;background:#fdfdfd;border:1px solid #cfcfcf;border-radius:5px;box-shadow:0 1px 0 #c8c8c8;"><svg width="81" height="45" style="position:absolute;left:-1px;top:-1px"><path d="M30.5 10 H49.5 L46 17.5 H34 Z" fill="#c00000"/><circle cx="40" cy="28" r="7.2" fill="none" stroke="#1060e0" stroke-width="2.4"/><path d="M40 17 V32" stroke="#c00000" stroke-width="3"/></svg></div>
<div class="a" style="left:1655px;top:591px;width:81px;height:45px;background:#fdfdfd;border:1px solid #cfcfcf;border-radius:5px;box-shadow:0 1px 0 #c8c8c8;"><svg width="81" height="45" style="position:absolute;left:-1px;top:-1px"><path d="M30.5 10 H49.5 L46 17.5 H34 Z" fill="#c00000"/><circle cx="40" cy="31.5" r="7.2" fill="none" stroke="#1060e0" stroke-width="2.4"/><path d="M27 31.5 H53" stroke="#1060e0" stroke-width="2"/><path d="M40 17 V32" stroke="#c00000" stroke-width="3"/></svg></div>
<div class="a" style="left:1750px;top:591px;width:81px;height:45px;background:#fdfdfd;border:1px solid #cfcfcf;border-radius:5px;box-shadow:0 1px 0 #c8c8c8;"><svg width="81" height="45" style="position:absolute;left:-1px;top:-1px"><path d="M28.0 17.5 V10.0 H35.5 M44.5 10.0 H52.0 V17.5 M52.0 26.5 V34.0 H44.5 M35.5 34.0 H28.0 V26.5" stroke="#0a5ad8" stroke-width="3" fill="none" stroke-linejoin="round" stroke-linecap="butt"/><circle cx="40" cy="22" r="4.4" fill="none" stroke="#0a5ad8" stroke-width="2.6"/></svg></div>
<div class="a" style="left:1838px;top:591px;width:81px;height:45px;background:#fdfdfd;border:1px solid #cfcfcf;border-radius:5px;box-shadow:0 1px 0 #c8c8c8;"><svg width="81" height="45" style="position:absolute;left:-1px;top:-1px"><path d="M31 11 H49 L45.5 18 H34.5 Z" fill="#0a5ad8"/><path d="M40 20 V32" stroke="#0a5ad8" stroke-width="3" stroke-linecap="round"/></svg></div>
<div class="a" style="left:1478px;top:670px;width:81px;height:45px;background:#fdfdfd;border:1px solid #cfcfcf;border-radius:5px;box-shadow:0 1px 0 #c8c8c8;"><svg width="81" height="45" style="position:absolute;left:-1px;top:-1px"><path d="M28.0 18.0 V10.5 H35.5 M44.5 10.5 H52.0 V18.0 M52.0 27.0 V34.5 H44.5 M35.5 34.5 H28.0 V27.0" stroke="#c00000" stroke-width="3" fill="none" stroke-linejoin="round" stroke-linecap="butt"/><circle cx="40" cy="22.5" r="7.3" fill="none" stroke="#1060e0" stroke-width="2.2"/><circle cx="40" cy="22.5" r="2.8" fill="#1060e0"/></svg></div>
<div class="a" style="left:1567px;top:670px;width:81px;height:45px;background:#fdfdfd;border:1px solid #cfcfcf;border-radius:5px;box-shadow:0 1px 0 #c8c8c8;"><svg width="81" height="45" style="position:absolute;left:-1px;top:-1px"><path d="M30.5 10 H49.5 L46 17.5 H34 Z" fill="#c00000"/><circle cx="40" cy="28" r="7.2" fill="none" stroke="#1060e0" stroke-width="2.4"/><path d="M40 17 V32" stroke="#c00000" stroke-width="3"/></svg></div>
<div class="a" style="left:1655px;top:670px;width:81px;height:45px;background:#fdfdfd;border:1px solid #cfcfcf;border-radius:5px;box-shadow:0 1px 0 #c8c8c8;"><svg width="81" height="45" style="position:absolute;left:-1px;top:-1px"><path d="M30.5 10 H49.5 L46 17.5 H34 Z" fill="#c00000"/><circle cx="40" cy="31.5" r="7.2" fill="none" stroke="#1060e0" stroke-width="2.4"/><path d="M27 31.5 H53" stroke="#1060e0" stroke-width="2"/><path d="M40 17 V32" stroke="#c00000" stroke-width="3"/></svg></div>
<div class="a" style="left:1750px;top:670px;width:81px;height:45px;background:#fdfdfd;border:1px solid #cfcfcf;border-radius:5px;box-shadow:0 1px 0 #c8c8c8;"><svg width="81" height="45" style="position:absolute;left:-1px;top:-1px"><path d="M28.0 17.5 V10.0 H35.5 M44.5 10.0 H52.0 V17.5 M52.0 26.5 V34.0 H44.5 M35.5 34.0 H28.0 V26.5" stroke="#0a5ad8" stroke-width="3" fill="none" stroke-linejoin="round" stroke-linecap="butt"/><circle cx="40" cy="22" r="4.4" fill="none" stroke="#0a5ad8" stroke-width="2.6"/></svg></div>
<div class="a" style="left:1838px;top:670px;width:81px;height:45px;background:#fdfdfd;border:1px solid #cfcfcf;border-radius:5px;box-shadow:0 1px 0 #c8c8c8;"><svg width="81" height="45" style="position:absolute;left:-1px;top:-1px"><path d="M31 11 H49 L45.5 18 H34.5 Z" fill="#0a5ad8"/><path d="M40 20 V32" stroke="#0a5ad8" stroke-width="3" stroke-linecap="round"/></svg></div>
<div class="a" style="left:1478px;top:750px;width:81px;height:45px;background:#fdfdfd;border:1px solid #cfcfcf;border-radius:5px;box-shadow:0 1px 0 #c8c8c8;"><svg width="81" height="45" style="position:absolute;left:-1px;top:-1px"><path d="M28.0 18.0 V10.5 H35.5 M44.5 10.5 H52.0 V18.0 M52.0 27.0 V34.5 H44.5 M35.5 34.5 H28.0 V27.0" stroke="#c00000" stroke-width="3" fill="none" stroke-linejoin="round" stroke-linecap="butt"/><circle cx="40" cy="22.5" r="7.3" fill="none" stroke="#1060e0" stroke-width="2.2"/><circle cx="40" cy="22.5" r="2.8" fill="#1060e0"/></svg></div>
<div class="a" style="left:1567px;top:750px;width:81px;height:45px;background:#fdfdfd;border:1px solid #cfcfcf;border-radius:5px;box-shadow:0 1px 0 #c8c8c8;"><svg width="81" height="45" style="position:absolute;left:-1px;top:-1px"><path d="M30.5 10 H49.5 L46 17.5 H34 Z" fill="#c00000"/><circle cx="40" cy="28" r="7.2" fill="none" stroke="#1060e0" stroke-width="2.4"/><path d="M40 17 V32" stroke="#c00000" stroke-width="3"/></svg></div>
<div class="a" style="left:1655px;top:750px;width:81px;height:45px;background:#fdfdfd;border:1px solid #cfcfcf;border-radius:5px;box-shadow:0 1px 0 #c8c8c8;"><svg width="81" height="45" style="position:absolute;left:-1px;top:-1px"><path d="M30.5 10 H49.5 L46 17.5 H34 Z" fill="#c00000"/><circle cx="40" cy="31.5" r="7.2" fill="none" stroke="#1060e0" stroke-width="2.4"/><path d="M27 31.5 H53" stroke="#1060e0" stroke-width="2"/><path d="M40 17 V32" stroke="#c00000" stroke-width="3"/></svg></div>
<div class="a" style="left:1750px;top:750px;width:81px;height:45px;background:#fdfdfd;border:1px solid #cfcfcf;border-radius:5px;box-shadow:0 1px 0 #c8c8c8;"><svg width="81" height="45" style="position:absolute;left:-1px;top:-1px"><path d="M28.0 17.5 V10.0 H35.5 M44.5 10.0 H52.0 V17.5 M52.0 26.5 V34.0 H44.5 M35.5 34.0 H28.0 V26.5" stroke="#0a5ad8" stroke-width="3" fill="none" stroke-linejoin="round" stroke-linecap="butt"/><circle cx="40" cy="22" r="4.4" fill="none" stroke="#0a5ad8" stroke-width="2.6"/></svg></div>
<div class="a" style="left:1838px;top:750px;width:81px;height:45px;background:#e0edfa;border:1px solid #3d8fe0;border-radius:5px;box-shadow:0 1px 0 #c8c8c8;border-width:2px;box-shadow:none"><svg width="81" height="45" style="position:absolute;left:-1px;top:-1px"><path d="M31 11 H49 L45.5 18 H34.5 Z" fill="#0a5ad8"/><path d="M40 20 V32" stroke="#0a5ad8" stroke-width="3" stroke-linecap="round"/></svg></div>
<div class="a" style="left:1478px;top:829px;width:81px;height:45px;background:#fdfdfd;border:1px solid #cfcfcf;border-radius:5px;box-shadow:0 1px 0 #c8c8c8;"><svg width="81" height="45" style="position:absolute;left:-1px;top:-1px"><path d="M28.0 18.0 V10.5 H35.5 M44.5 10.5 H52.0 V18.0 M52.0 27.0 V34.5 H44.5 M35.5 34.5 H28.0 V27.0" stroke="#c00000" stroke-width="3" fill="none" stroke-linejoin="round" stroke-linecap="butt"/><circle cx="40" cy="22.5" r="7.3" fill="none" stroke="#1060e0" stroke-width="2.2"/><circle cx="40" cy="22.5" r="2.8" fill="#1060e0"/></svg></div>
<div class="a" style="left:1567px;top:829px;width:81px;height:45px;background:#fdfdfd;border:1px solid #cfcfcf;border-radius:5px;box-shadow:0 1px 0 #c8c8c8;"><svg width="81" height="45" style="position:absolute;left:-1px;top:-1px"><path d="M30.5 10 H49.5 L46 17.5 H34 Z" fill="#c00000"/><circle cx="40" cy="28" r="7.2" fill="none" stroke="#1060e0" stroke-width="2.4"/><path d="M40 17 V32" stroke="#c00000" stroke-width="3"/></svg></div>
<div class="a" style="left:1655px;top:829px;width:81px;height:45px;background:#fdfdfd;border:1px solid #cfcfcf;border-radius:5px;box-shadow:0 1px 0 #c8c8c8;"><svg width="81" height="45" style="position:absolute;left:-1px;top:-1px"><path d="M30.5 10 H49.5 L46 17.5 H34 Z" fill="#c00000"/><circle cx="40" cy="31.5" r="7.2" fill="none" stroke="#1060e0" stroke-width="2.4"/><path d="M27 31.5 H53" stroke="#1060e0" stroke-width="2"/><path d="M40 17 V32" stroke="#c00000" stroke-width="3"/></svg></div>
<div class="a" style="left:1750px;top:829px;width:81px;height:45px;background:#fdfdfd;border:1px solid #cfcfcf;border-radius:5px;box-shadow:0 1px 0 #c8c8c8;"><svg width="81" height="45" style="position:absolute;left:-1px;top:-1px"><path d="M28.0 17.5 V10.0 H35.5 M44.5 10.0 H52.0 V17.5 M52.0 26.5 V34.0 H44.5 M35.5 34.0 H28.0 V26.5" stroke="#0a5ad8" stroke-width="3" fill="none" stroke-linejoin="round" stroke-linecap="butt"/><circle cx="40" cy="22" r="4.4" fill="none" stroke="#0a5ad8" stroke-width="2.6"/></svg></div>
<div class="a" style="left:1838px;top:829px;width:81px;height:45px;background:#fdfdfd;border:1px solid #cfcfcf;border-radius:5px;box-shadow:0 1px 0 #c8c8c8;"><svg width="81" height="45" style="position:absolute;left:-1px;top:-1px"><path d="M31 11 H49 L45.5 18 H34.5 Z" fill="#0a5ad8"/><path d="M40 20 V32" stroke="#0a5ad8" stroke-width="3" stroke-linecap="round"/></svg></div>
<div class="a" style="left:838px;top:943px;width:1275px;height:134px;border:1px solid #d9d9d9;box-shadow:inset 1px 1px 0 #fbfbfb"></div>
<div class="t" style="left:844px;top:933px;font-size:16px;background:linear-gradient(transparent 7px,#f0f0f0 7px);padding:0 4px 0 3px">Vision Calibration</div>
<div class="t" style="top:971px;font-size:16px;right:1153px;">Vision Location</div>
<div class="a" style="left:1017px;top:966px;width:150px;height:29px;background:#fcfcfc;border:1px solid #adadad"></div>
<div class="t" style="top:971px;font-size:16px;left:1022px;">None</div>
<svg class="a" style="left:1145px;top:977px;" width="14" height="8" viewBox="0 0 14 8"><polyline points="1,1 7.0,7 13,1" fill="none" stroke="#505050" stroke-width="1.3"/></svg>
<div class="a" style="left:838px;top:1092px;width:1px;height:178px;background:#d9d9d9"></div>
<div class="a" style="left:2112px;top:1092px;width:1px;height:178px;background:#d9d9d9"></div>
<div class="a" style="left:838px;top:1092px;width:1275px;height:1px;background:#d9d9d9"></div>
<div class="t" style="left:844px;top:1082px;background:linear-gradient(transparent 7px,#f0f0f0 7px);padding:0 4px 0 3px">Cloning Settings</div>
<div class="t" style="top:1121px;font-size:16px;right:1153px;">Behavior</div>
<svg class="a" style="left:1022px;top:1122px;" width="20" height="20" viewBox="0 0 20 20"><circle cx="10" cy="10" r="8.8" fill="#fff" stroke="#5a5a5a" stroke-width="1.3"/></svg>
<svg class="a" style="left:1022px;top:1166px;" width="20" height="20" viewBox="0 0 20 20"><circle cx="10" cy="10" r="9.5" fill="#0b5fce"/><circle cx="10" cy="10" r="4" fill="#fff"/></svg>
<svg class="a" style="left:1022px;top:1209px;" width="20" height="20" viewBox="0 0 20 20"><circle cx="10" cy="10" r="8.8" fill="#fff" stroke="#5a5a5a" stroke-width="1.3"/></svg>
<div class="t" style="top:1121px;font-size:16px;left:1048px;">Template</div>
<div class="t" style="top:1165px;font-size:16px;left:1048px;">Clones from Template</div>
<div class="t" style="top:1209px;font-size:16px;left:1048px;">Locked</div>
<div class="a" style="left:1229px;top:1116px;width:587px;height:118px;border:1px solid #d9d9d9"></div>
<div class="a" style="left:1239px;top:1125px;width:572px;height:46px;background:#fdfdfd;border:1px solid #cfcfcf;border-radius:5px;box-shadow:0 1px 0 #c8c8c8;box-shadow:0 1px 0 #d0d0d0"></div>
<svg class="a" style="left:1352px;top:1131px;" width="30" height="30" viewBox="0 0 30 30"><path d="M11 2 H17 V12 H22 L14 21 L6 12 H11 Z" fill="#c00000"/><path d="M4 26 H24" stroke="#c00000" stroke-width="3"/></svg>
<div class="t" style="top:1137px;font-size:16px;left:1389px;">Clone Tool Changer Settings from Template</div>
<div class="t" style="top:1185px;font-size:16px;right:768px;">Locations?</div>
<div class="a" style="left:1408px;top:1188px;width:19px;height:19px;border-radius:4px;background:#0b5fce"></div>
<svg class="a" style="left:1408px;top:1188px;" width="19" height="19" viewBox="0 0 19 19"><path d="M5 10 L8.3 13 L14 6.5" stroke="#fff" stroke-width="1.4" fill="none"/></svg>
<div class="t" style="top:1185px;font-size:16px;right:388px;">Vision Calibration?</div>
<div class="a" style="left:1788px;top:1188px;width:19px;height:19px;border-radius:4px;background:#0b5fce"></div>
<svg class="a" style="left:1788px;top:1188px;" width="19" height="19" viewBox="0 0 19 19"><path d="M5 10 L8.3 13 L14 6.5" stroke="#fff" stroke-width="1.4" fill="none"/></svg>
<div class="a" style="left:1230px;top:1256px;width:585px;height:14px;background:#f8f8f8;border-radius:5px 5px 0 0;border:1px solid #ececec;border-bottom:none"></div>
<svg class="a" style="left:1354px;top:1264px;" width="22" height="6" viewBox="0 0 22 6"><path d="M0 0 H20 L17 6 H3 Z" fill="#808080"/></svg>
<div class="a" style="left:1949px;top:1281px;width:87px;height:31px;background:#fdfdfd;border:1px solid #cfcfcf;border-radius:5px;box-shadow:0 1px 0 #c8c8c8;box-shadow:0 1px 0 #d0d0d0"></div>
<div class="t" style="top:1286px;font-size:16px;left:1692px;width:600px;text-align:center;">Reset</div>
<div class="a" style="left:2048px;top:1281px;width:84px;height:31px;background:#fdfdfd;border:1px solid #cfcfcf;border-radius:5px;box-shadow:0 1px 0 #c8c8c8;box-shadow:0 1px 0 #d0d0d0"></div>
<div class="t" style="top:1286px;font-size:16px;left:1790px;width:600px;text-align:center;">Apply</div>
<div class="a" style="left:8px;top:1333px;width:894px;height:27px;background:#f0f0f0;border-top:2px solid #8c8c8c;border-left:2px solid #8c8c8c;border-bottom:2px solid #fff;border-right:2px solid #fff"></div>
<div class="a" style="left:925px;top:1334px;width:339px;height:26px;background:#f0f0f0;border-top:2px solid #8c8c8c;border-left:2px solid #8c8c8c;border-bottom:2px solid #fff;border-right:2px solid #fff"></div>
<div class="t" style="top:1336px;font-size:16px;left:930px;">Placements: 0 / 0 Total | 0 / 0 Selected Board</div>
<div class="a" style="left:1274px;top:1334px;width:300px;height:23px;background:#e6e6e6;border:1px solid #bcbcbc"></div>
<div class="a" style="left:1275px;top:1335px;width:2px;height:21px;background:#0078d7"></div>
<div class="t" style="top:1334px;font-size:16px;color:#3a7ee0;left:1122px;width:600px;text-align:center;">0%</div>
<div class="a" style="left:1583px;top:1332px;width:567px;height:29px;background:#bbffbb;border-top:2px solid #6a8a6a;border-left:2px solid #6a8a6a;border-bottom:3px solid #fff"></div>
<div class="a" style="left:2150px;top:1332px;width:10px;height:37px;background:#f0f0f0"></div>
<svg class="a" style="left:2146px;top:1355px;" width="14" height="14" viewBox="0 0 14 14"><path d="M14 0 V14 H0 A14 14 0 0 0 14 0 Z" fill="#0a5ad0"/></svg>
<div class="t" style="top:1337px;font-size:19.8px;color:#111;font-family:'Liberation Mono',monospace;left:1585px;">X:16.496</div>
<div class="t" style="top:1337px;font-size:19.8px;color:#111;font-family:'Liberation Mono',monospace;left:1731px;">Y:88.530</div>
<div class="t" style="top:1337px;font-size:19.8px;color:#111;font-family:'Liberation Mono',monospace;left:1875px;">Z:5.600</div>
<div class="t" style="top:1337px;font-size:19.8px;color:#111;font-family:'Liberation Mono',monospace;left:2017px;">C:200.000</div>
<div class="a" style="left:0px;top:1367px;width:2160px;height:2px;background:#0f2e4f"></div>
<svg class="a" style="left:0px;top:1358px;" width="10" height="10" viewBox="0 0 10 10"><path d="M0 0 A10 10 0 0 0 10 10 H0 Z" fill="#0a6ad8"/></svg>
<svg class="a" style="left:1894px;top:781px;" width="20" height="30" viewBox="0 0 20 30"><path d="M1.5 1.5 V25.5 L7.5 19.5 L12 28.5 L15 27 L10.5 18 H18 Z" fill="#fff" stroke="#000" stroke-width="1.3" stroke-linejoin="miter"/></svg>
<div class="a" style="left:1829px;top:735px;width:103px;height:80px;border:7px solid #ff0000;border-radius:7px"></div>
<svg class="a" style="left:1390px;top:800px;" width="440" height="300" viewBox="0 0 440 300"><path d="M10.3 286.3 L392 33" stroke="#ff0000" stroke-width="8.3" stroke-linecap="butt"/><path d="M428 14.2 L379.7 27.3 L391.5 33.5 L396.3 53.6 Z" fill="#ff0000"/></svg>
</body></html>
